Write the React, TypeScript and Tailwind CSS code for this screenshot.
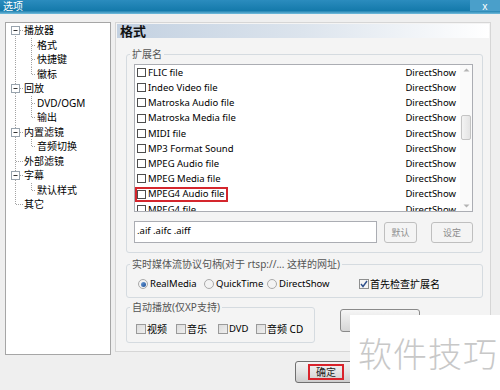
import React from 'react';

type Node = { level: 0 | 1; label: string; box?: boolean; last?: boolean; first?: boolean; end?: boolean };

const tree: Node[] = [
  { level: 0, label: '播放器', box: true, first: true },
  { level: 1, label: '格式' },
  { level: 1, label: '快捷键' },
  { level: 1, label: '徽标', last: true },
  { level: 0, label: '回放', box: true },
  { level: 1, label: 'DVD/OGM' },
  { level: 1, label: '输出', last: true },
  { level: 0, label: '内置滤镜', box: true },
  { level: 1, label: '音频切换', last: true },
  { level: 0, label: '外部滤镜' },
  { level: 0, label: '字幕', box: true },
  { level: 1, label: '默认样式', last: true },
  { level: 0, label: '其它', end: true },
];

const formats = [
  'FLIC file',
  'Indeo Video file',
  'Matroska Audio file',
  'Matroska Media file',
  'MIDI file',
  'MP3 Format Sound',
  'MPEG Audio file',
  'MPEG Media file',
  'MPEG4 Audio file',
  'MPEG4 file',
];

const dot = { stroke: '#a3a3a3', strokeWidth: 1, strokeDasharray: '1 1' };

function TreeRow({ n }: { n: Node }) {
  return (
    <div className="flex items-center h-[14.5px]">
      <svg width="17" height="14.5" className="shrink-0">
        <line x1="9.5" x2="9.5" y1={n.first ? 7 : 0} y2={n.end ? 7.5 : 14.5} {...dot} />
        {n.level === 0 && <line x1="10" x2="17" y1="7.5" y2="7.5" {...dot} />}
        {n.box && (
          <g>
            <rect x="5.5" y="3.5" width="8" height="8" fill="#fff" stroke="#98a3ad" />
            <line x1="7.5" x2="11.5" y1="7.5" y2="7.5" stroke="#333" />
          </g>
        )}
      </svg>
      {n.level === 1 && (
        <svg width="13" height="14.5" className="shrink-0">
          <line x1="8.5" x2="8.5" y1="0" y2={n.last ? 7.5 : 14.5} {...dot} />
          <line x1="9" x2="13" y1="7.5" y2="7.5" {...dot} />
        </svg>
      )}
      <span className="ml-[1px] text-[10px] leading-none text-black whitespace-nowrap">{n.label}</span>
    </div>
  );
}

function Box({ gray, checked }: { gray?: boolean; checked?: boolean }) {
  if (checked) {
    return (
      <span className="w-[10px] h-[10px] border border-[#8e8f8f] bg-[#f4f4f4] flex items-center justify-center shrink-0">
        <svg width="8" height="8" viewBox="0 0 8 8">
          <path d="M1 4 L3 6.5 L7 1" fill="none" stroke="#2d4f8c" strokeWidth="1.4" />
        </svg>
      </span>
    );
  }
  return gray ? (
    <span className="w-[10px] h-[10px] border border-[#9a9a9a] bg-gradient-to-br from-[#dcdcdc] to-[#efefef] shrink-0" />
  ) : (
    <span className="w-[9px] h-[9px] border border-[#4d4d4d] bg-white shrink-0" />
  );
}

function Radio({ on }: { on?: boolean }) {
  return (
    <span className="w-[10px] h-[10px] rounded-full border border-[#a9a9a9] bg-[#f3f3f3] flex items-center justify-center shrink-0">
      {on && <span className="w-[5px] h-[5px] rounded-full bg-gradient-to-br from-[#6f9fd8] to-[#1c4f98]" />}
    </span>
  );
}

export default function App() {
  return (
    <div className="relative w-[500px] h-[390px] overflow-hidden bg-[#efefef] font-['Noto_Sans','Noto_Sans_CJK_SC',sans-serif] text-black select-none">
      {/* title bar */}
      <div className="flex h-[14px] bg-[linear-gradient(#2b8cbe,#157aab_75%,#73bcdc)]">
        <span className="pl-[3px] text-[10px] leading-[12px] text-white">选项</span>
        <div className="ml-auto w-[30px] h-[11px] bg-[#4a9fca] flex items-center justify-center text-white text-[10px] leading-none">
          x
        </div>
      </div>

      <div className="flex pt-[8px] pl-[5px] gap-[4px]">
        {/* tree */}
        <div className="w-[106px] h-[333px] bg-white border border-[#a6a6a6]">
          {tree.map((n, i) => (
            <TreeRow key={i} n={n} />
          ))}
        </div>

        {/* options panel */}
        <div className="w-[376px] h-[330px] bg-[#f4f4f4] border border-[#d6d6d6]">
          <div className="mx-[1px] mt-[1px] h-[14px] bg-gradient-to-r from-[#c3d1e1] via-[#dce4ed] to-white pl-[3px] text-[13px] leading-[14px] font-bold text-[#111]">
            格式
          </div>

          <fieldset className="ml-[10px] mt-[9px] w-[357px] h-[206px] border border-[#d5dbe0] rounded-[3px] px-0 pb-0">
            <legend className="ml-[3px] px-[2px] text-[10px] leading-[14px] text-[#555]">扩展名</legend>
            <div className="ml-[7px] mt-[3px] w-[339px] h-[148px] bg-white border border-[#abadb3] flex">
              <div className="flex-1 overflow-hidden">
                {formats.map((f) => (
                  <div key={f} className="flex items-center justify-between h-[15.2px] pr-[4px]">
                    <span
                      className={
                        'flex items-center gap-[2px] h-[15px] pr-[1px] border-2 ' +
                        (f === 'MPEG4 Audio file' ? 'border-[#d4262d]' : 'border-transparent')
                      }
                    >
                      <Box />
                      <span className="text-[9.5px] leading-none whitespace-nowrap pr-[1px]">{f}</span>
                    </span>
                    <span className="text-[9.5px] leading-none">DirectShow</span>
                  </div>
                ))}
              </div>
              <div className="w-[12px] bg-[#fafafa] flex flex-col items-center">
                <svg width="7" height="4" className="mt-[3px]">
                  <path d="M0.5 3.5 L3.5 0.5 L6.5 3.5Z" fill="#b3b3b3" />
                </svg>
                <div className="mt-[43px] w-[10px] h-[25px] rounded-[2px] border border-[#c4c4c4] bg-gradient-to-r from-[#f3f3f3] to-[#e4e4e4]" />
                <svg width="7" height="4" className="mt-auto mb-[3px]">
                  <path d="M0.5 0.5 L3.5 3.5 L6.5 0.5Z" fill="#b3b3b3" />
                </svg>
              </div>
            </div>
            <div className="ml-[7px] mt-[9px] flex items-start">
              <div className="w-[243px] h-[22px] bg-white border border-[#abadb3] pl-[2px] text-[9.5px] leading-[18px]">
                .aif .aifc .aiff
              </div>
              <button className="ml-[7px] mt-[1px] w-[33px] h-[21px] rounded-[3px] border border-[#bfbfbf] bg-[#f4f4f4] text-[9px] text-[#8c8c8c]">
                默认
              </button>
              <button className="ml-[14px] mt-[1px] w-[42px] h-[21px] rounded-[3px] border border-[#bfbfbf] bg-[#f4f4f4] text-[9px] text-[#8c8c8c]">
                设定
              </button>
            </div>
          </fieldset>

          <fieldset className="ml-[10px] mt-[4px] w-[357px] border border-[#d5dbe0] rounded-[3px] px-0 pb-[6px]">
            <legend className="ml-[3px] px-[2px] text-[10px] leading-[14px] text-[#555] whitespace-nowrap">
              实时媒体流协议句柄(对于 rtsp://... 这样的网址)
            </legend>
            <div className="mt-[6px] pl-[11px] flex items-center h-[14px] text-[9.5px] leading-none">
              <span className="w-[66px] flex items-center gap-[2px]">
                <Radio on /> RealMedia
              </span>
              <span className="w-[63px] flex items-center gap-[2px]">
                <Radio /> QuickTime
              </span>
              <span className="w-[92px] flex items-center gap-[2px]">
                <Radio /> DirectShow
              </span>
              <span className="flex items-center gap-[1px] text-[10px]">
                <Box checked /> 首先检查扩展名
              </span>
            </div>
          </fieldset>

          <div className="ml-[10px] mt-[2px] flex items-start">
            <fieldset className="w-[189px] border border-[#d5dbe0] rounded-[3px] px-0 pb-[6px]">
              <legend className="ml-[3px] px-[2px] text-[10px] leading-[14px] text-[#555]">自动播放(仅XP支持)</legend>
              <div className="mt-[8px] pl-[9px] flex items-center h-[14px] text-[10px] leading-none">
                <span className="w-[40px] flex items-center gap-[1px]">
                  <Box gray /> 视频
                </span>
                <span className="w-[42px] flex items-center gap-[1px]">
                  <Box gray /> 音乐
                </span>
                <span className="w-[38px] flex items-center gap-[1px]">
                  <Box gray /> <span className="text-[9.5px]">DVD</span>
                </span>
                <span className="flex items-center gap-[1px]">
                  <Box gray /> 音频 CD
                </span>
              </div>
            </fieldset>
            <button className="ml-[25px] mt-[9px] w-[80px] h-[23px] rounded-[3px] border border-[#8a8a8a] bg-gradient-to-b from-[#f6f6f6] to-[#d6d6d6]" />
          </div>
        </div>
      </div>

      {/* dialog buttons */}
      <div className="flex pl-[295px] mt-[6px]">
        <button className="w-[58px] h-[22px] rounded-[3px] border border-[#707070] bg-gradient-to-b from-[#f4f4f4] via-[#e4e4e4] to-[#cdcdcd] flex items-center pl-[12px]">
          <span className="w-[36px] h-[16px] border-2 border-[#d9232b] flex items-center justify-center text-[10px] leading-none text-[#222]">
            确定
          </span>
        </button>
      </div>

      {/* watermark */}
      <div className="absolute left-[350px] top-[315px] w-[150px] h-[75px] bg-white flex items-center pl-[8px] text-[34px] leading-none text-[#c8c8c8] font-['Noto_Sans_CJK_SC',sans-serif] font-light tracking-[1px]">
        软件技巧
      </div>
    </div>
  );
}
